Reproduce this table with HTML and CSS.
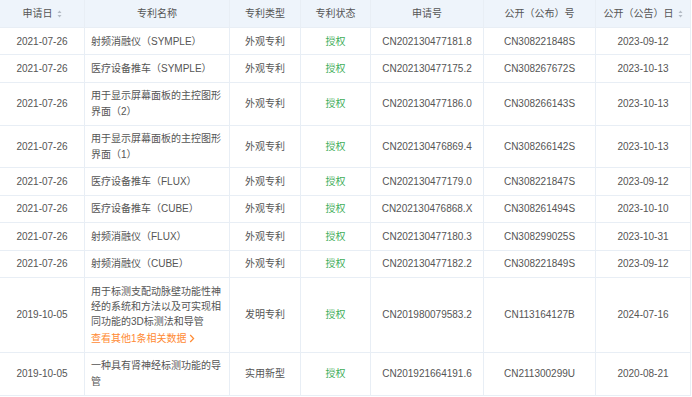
FILE: index.html
```html
<!DOCTYPE html>
<html lang="zh">
<head>
<meta charset="utf-8">
<link rel="stylesheet" href="styles.css">
</head>
<body>
<div class="table">
  <div class="row head">
    <div class="cell">申请日<svg class="sort" width="5" height="8" viewBox="0 0 5 8"><path d="M2.5 0.5 L4.5 3 L0.5 3 Z M2.5 7.5 L4.5 5 L0.5 5 Z" fill="#b5bcc6"/></svg></div>
    <div class="cell">专利名称</div>
    <div class="cell">专利类型</div>
    <div class="cell">专利状态</div>
    <div class="cell">申请号</div>
    <div class="cell">公开（公布）号</div>
    <div class="cell">公开（公告）日<svg class="sort" width="5" height="8" viewBox="0 0 5 8"><path d="M2.5 0.5 L4.5 3 L0.5 3 Z M2.5 7.5 L4.5 5 L0.5 5 Z" fill="#b5bcc6"/></svg></div>
  </div>
  <div class="row">
    <div class="cell">2021-07-26</div>
    <div class="cell name">射频消融仪（SYMPLE）</div>
    <div class="cell">外观专利</div>
    <div class="cell ok">授权</div>
    <div class="cell">CN202130477181.8</div>
    <div class="cell">CN308221848S</div>
    <div class="cell">2023-09-12</div>
  </div>
  <div class="row">
    <div class="cell">2021-07-26</div>
    <div class="cell name">医疗设备推车（SYMPLE）</div>
    <div class="cell">外观专利</div>
    <div class="cell ok">授权</div>
    <div class="cell">CN202130477175.2</div>
    <div class="cell">CN308267672S</div>
    <div class="cell">2023-10-13</div>
  </div>
  <div class="row">
    <div class="cell">2021-07-26</div>
    <div class="cell name">用于显示屏幕面板的主控图形界面（2）</div>
    <div class="cell">外观专利</div>
    <div class="cell ok">授权</div>
    <div class="cell">CN202130477186.0</div>
    <div class="cell">CN308266143S</div>
    <div class="cell">2023-10-13</div>
  </div>
  <div class="row">
    <div class="cell">2021-07-26</div>
    <div class="cell name">用于显示屏幕面板的主控图形界面（1）</div>
    <div class="cell">外观专利</div>
    <div class="cell ok">授权</div>
    <div class="cell">CN202130476869.4</div>
    <div class="cell">CN308266142S</div>
    <div class="cell">2023-10-13</div>
  </div>
  <div class="row">
    <div class="cell">2021-07-26</div>
    <div class="cell name">医疗设备推车（FLUX）</div>
    <div class="cell">外观专利</div>
    <div class="cell ok">授权</div>
    <div class="cell">CN202130477179.0</div>
    <div class="cell">CN308221847S</div>
    <div class="cell">2023-09-12</div>
  </div>
  <div class="row">
    <div class="cell">2021-07-26</div>
    <div class="cell name">医疗设备推车（CUBE）</div>
    <div class="cell">外观专利</div>
    <div class="cell ok">授权</div>
    <div class="cell">CN202130476868.X</div>
    <div class="cell">CN308261494S</div>
    <div class="cell">2023-10-10</div>
  </div>
  <div class="row">
    <div class="cell">2021-07-26</div>
    <div class="cell name">射频消融仪（FLUX）</div>
    <div class="cell">外观专利</div>
    <div class="cell ok">授权</div>
    <div class="cell">CN202130477180.3</div>
    <div class="cell">CN308299025S</div>
    <div class="cell">2023-10-31</div>
  </div>
  <div class="row">
    <div class="cell">2021-07-26</div>
    <div class="cell name">射频消融仪（CUBE）</div>
    <div class="cell">外观专利</div>
    <div class="cell ok">授权</div>
    <div class="cell">CN202130477182.2</div>
    <div class="cell">CN308221849S</div>
    <div class="cell">2023-09-12</div>
  </div>
  <div class="row">
    <div class="cell">2019-10-05</div>
    <div class="cell name">用于标测支配动脉壁功能性神经的系统和方法以及可实现相同功能的3D标测法和导管<a class="more">查看其他1条相关数据<svg width="6" height="9" viewBox="0 0 6 9"><path d="M1.2 1 L4.6 4.5 L1.2 8" fill="none" stroke="#ff8a33" stroke-width="1.2"/></svg></a></div>
    <div class="cell">发明专利</div>
    <div class="cell ok">授权</div>
    <div class="cell">CN201980079583.2</div>
    <div class="cell">CN113164127B</div>
    <div class="cell">2024-07-16</div>
  </div>
  <div class="row">
    <div class="cell">2019-10-05</div>
    <div class="cell name">一种具有肾神经标测功能的导管</div>
    <div class="cell">实用新型</div>
    <div class="cell ok">授权</div>
    <div class="cell">CN201921664191.6</div>
    <div class="cell">CN211300299U</div>
    <div class="cell">2020-08-21</div>
  </div>
</div>
</body>
</html>
```

FILE: styles.css
```css
html, body {
  margin: 0;
  padding: 0;
  background: #ffffff;
}
body {
  font-family: "Liberation Sans", "Noto Sans CJK SC", sans-serif;
  font-size: 10px;
  color: #555555;
}
.table {
  width: 691px;
}
.row {
  display: grid;
  grid-template-columns: 85px 145px 71px 70px 113px 112px 95px;
}
.cell {
  border-right: 1px solid #e8eef5;
  border-bottom: 1px solid #e8eef5;
  padding: 5.5px 4px;
  line-height: 15.4px;
  text-align: center;
  display: flex;
  align-items: center;
  justify-content: center;
}
.head .cell {
  background: #eef4fb;
  padding-top: 0;
  padding-bottom: 0;
  box-sizing: border-box;
  height: 28px;
  color: #555555;
}
.sort {
  margin-left: 4px;
}
.cell.name {
  flex-direction: column;
  align-items: flex-start;
  text-align: left;
  padding-left: 6px;
  padding-right: 6px;
  justify-content: center;
}
.ok {
  color: #3fae5a;
}
.more {
  color: #ff8a33;
  display: flex;
  align-items: center;
  margin-top: 1px;
}
.more svg {
  margin-left: 2px;
}
```
